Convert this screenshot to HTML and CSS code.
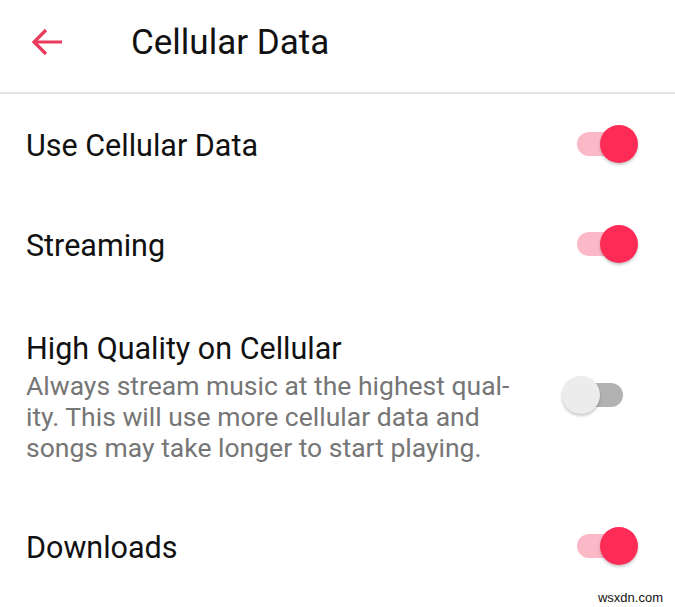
FILE: index.html
```html
<!DOCTYPE html>
<html>
<head>
<meta charset="utf-8">
<link rel="stylesheet" href="styles.css">
</head>
<body>
<div class="screen">
  <header class="appbar">
    <span class="back" aria-label="Back">
      <svg width="34" height="34" viewBox="0 0 34 34"><path d="M3 17 H31 M15 5 L3 17 L15 29" fill="none" stroke="#ea3a5e" stroke-width="3.2" stroke-linecap="butt" stroke-linejoin="miter"/></svg>
    </span>
    <h1 class="title">Cellular Data</h1>
  </header>
  <div class="list">
    <div class="row">
      <div class="text"><div class="label">Use Cellular Data</div></div>
      <div class="switch on"><span class="track"></span><span class="thumb"></span></div>
    </div>
    <div class="row">
      <div class="text"><div class="label">Streaming</div></div>
      <div class="switch on"><span class="track"></span><span class="thumb"></span></div>
    </div>
    <div class="row tall">
      <div class="text">
        <div class="label">High Quality on Cellular</div>
        <div class="desc">Always stream music at the highest qual-<br>ity. This will use more cellular data and<br>songs may take longer to start playing.</div>
      </div>
      <div class="switch off"><span class="track"></span><span class="thumb"></span></div>
    </div>
    <div class="row">
      <div class="text"><div class="label">Downloads</div></div>
      <div class="switch on"><span class="track"></span><span class="thumb"></span></div>
    </div>
  </div>
  <div class="watermark">wsxdn.com</div>
</div>
</body>
</html>
```
FILE: styles.css
```css
html, body {
  margin: 0;
  padding: 0;
  background: #ffffff;
}
body {
  font-family: Roboto, "Liberation Sans", sans-serif;
  color: #111111;
}
.screen {
  width: 675px;
  height: 607px;
  position: relative;
  overflow: hidden;
}
.appbar {
  height: 92px;
  display: flex;
  align-items: center;
  border-bottom: 2px solid #e4e4e4;
  box-sizing: content-box;
}
.back {
  width: 34px;
  height: 34px;
  margin-left: 31px;
  margin-top: -8px;
  display: flex;
}
.title {
  margin: -7px 0 0 66px;
  font-size: 35px;
  font-weight: 400;
  color: #111111;
}
.list {
  display: flex;
  flex-direction: column;
}
.row {
  height: 100px;
  display: flex;
  align-items: center;
  justify-content: space-between;
  padding: 0 37px 0 26px;
}
.row.tall {
  height: 202px;
}
.text {
  padding-top: 4px;
}
.label {
  font-size: 30.5px;
  line-height: 36px;
  color: #111111;
}
.desc {
  margin-top: 3px;
  font-size: 26.5px;
  line-height: 31px;
  color: #767676;
}
.switch {
  position: relative;
  width: 74px;
  height: 38px;
  flex: none;
}
.track {
  position: absolute;
  left: 13px;
  top: 7px;
  width: 48px;
  height: 24px;
  border-radius: 12px;
}
.thumb {
  position: absolute;
  top: 0;
  width: 38px;
  height: 38px;
  border-radius: 50%;
  box-shadow: 0 2px 3px rgba(0,0,0,0.22);
}
.switch.on .track { background: #fbb9c7; }
.switch.on .thumb { left: 36px; background: #fe2b56; }
.switch.off .track { background: #b2b2b2; left: 11px; }
.switch.off .thumb { left: -2px; background: #ececec; }
.watermark {
  position: absolute;
  right: 12px;
  bottom: 2px;
  font-family: "Liberation Sans", Arial, sans-serif;
  font-size: 13px;
  color: #111111;
}
```
